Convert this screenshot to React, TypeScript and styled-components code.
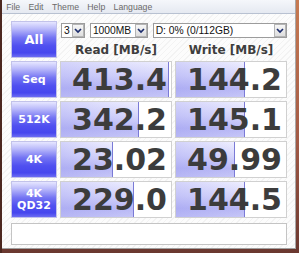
import React from 'react';
import styled, { createGlobalStyle } from 'styled-components';

const Global = createGlobalStyle`
  html, body { margin: 0; padding: 0; background: #fff; }
  body { width: 299px; height: 253px; overflow: hidden; }
`;

const Frame = styled.div`
  width: 299px;
  height: 253px;
  box-sizing: border-box;
  display: flex;
  padding: 0 3px 4px 2px;
  background:
    linear-gradient(to right, #4c2820 0, #4c2820 2px, transparent 2px),
    linear-gradient(to bottom, #c77a52 0%, #a25a46 55%, #6a3830 100%);
`;

const Client = styled.div`
  flex: 1;
  display: flex;
  flex-direction: column;
  border-right: 1px solid #a9a9a9;
  border-bottom: 1px solid #a0a0a0;
  background: repeating-linear-gradient(135deg, #fcfcfc 0px, #fcfcfc 3px, #f3f3f3 3px, #f3f3f3 4px);
`;

const MenuBar = styled.div`
  height: 12px;
  padding-top: 1px;
  display: flex;
  align-items: flex-start;
  background: linear-gradient(to bottom, #f5f7fb, #e5e9f1);
  border-bottom: 1px solid #b8c1d1;
  font-family: 'Liberation Sans', Arial, sans-serif;
  font-size: 8.7px;
  line-height: 12px;
  color: #6a6a6a;
`;

const MenuItem = styled.span`
  padding: 0 4.2px;
`;

const Body = styled.div`
  display: flex;
  flex-direction: column;
  padding: 7px 0 0 9px;
`;

const Grid = styled.div`
  display: grid;
  grid-template-columns: 46px 112px 112px;
  grid-auto-rows: 37px;
  column-gap: 3px;
  row-gap: 3px;
`;

const LabelButton = styled.div<{ $big?: boolean }>`
  box-sizing: border-box;
  border: 1px solid #c2c2ea;
  background: linear-gradient(to bottom, #e6e6ff 0%, #b8b8fa 20%, #7474f3 45%, #5050f0 68%, #4646ee 88%, #6c6cf3 100%);
  color: #fff;
  font-family: 'DejaVu Sans', Verdana, sans-serif;
  font-weight: bold;
  font-size: ${(p) => (p.$big ? '13px' : '11px')};
  line-height: 12px;
  display: flex;
  align-items: center;
  justify-content: center;
  text-align: center;
`;

const TopArea = styled.div`
  grid-column: 2 / span 2;
  display: flex;
  flex-direction: column;
`;

const SelectRow = styled.div`
  display: flex;
  gap: 5px;
  margin: 2px 0 0 1px;
`;

const SelectBox = styled.div<{ $w: number }>`
  box-sizing: border-box;
  width: ${(p) => p.$w}px;
  height: 15px;
  display: flex;
  border: 1px solid #9c9c9c;
  background: #fff;
`;

const SelectText = styled.span`
  flex: 1;
  padding-left: 2px;
  font-family: 'Liberation Sans', Arial, sans-serif;
  font-size: 10.3px;
  line-height: 13px;
  color: #111;
  white-space: nowrap;
  overflow: hidden;
`;

const ArrowBox = styled.span`
  box-sizing: border-box;
  width: 12px;
  height: 13px;
  border: 1px solid #b4b4b4;
  background: linear-gradient(to bottom, #f6f6f6, #dedede);
  display: flex;
  align-items: center;
  justify-content: center;
`;

const Headers = styled.div`
  display: grid;
  grid-template-columns: 112px 112px;
  column-gap: 3px;
  margin-top: 5px;
  font-family: 'DejaVu Sans', Verdana, sans-serif;
  font-weight: bold;
  font-size: 12px;
  line-height: 14px;
  color: #3e3e3e;
  text-align: center;
`;

const Cell = styled.div`
  position: relative;
  box-sizing: border-box;
  border: 1px solid #d0d0d0;
  background: #fff;
  overflow: hidden;
  display: flex;
  align-items: center;
  justify-content: flex-end;
  padding-right: 4px;
`;

const Bar = styled.div`
  position: absolute;
  left: 0;
  top: 0;
  bottom: 0;
  box-sizing: border-box;
  border-right: 1px solid #7a7ad6;
  background:
    linear-gradient(to right, rgba(150, 150, 240, 0.3), rgba(150, 150, 240, 0)),
    linear-gradient(to bottom, #eeeeff 0%, #d6d6fb 40%, #b8b8f5 75%, #c6c6f7 100%);
`;

const Value = styled.span`
  position: relative;
  font-family: 'DejaVu Sans', Verdana, sans-serif;
  font-weight: bold;
  font-size: 30px;
  line-height: 30px;
  color: #3c3c3c;
`;

const InfoBox = styled.div`
  box-sizing: border-box;
  width: 276px;
  height: 22px;
  margin-top: 5px;
  border: 1px solid #c4c4c4;
  background: #fff;
`;

const Chevron = () => (
  <svg width="8" height="6" viewBox="0 0 8 6">
    <polyline points="1,1 4,4 7,1" fill="none" stroke="#1c2c6c" strokeWidth="1.7" />
  </svg>
);

const Select = ({ w, text }: { w: number; text: string }) => (
  <SelectBox $w={w}>
    <SelectText>{text}</SelectText>
    <ArrowBox>
      <Chevron />
    </ArrowBox>
  </SelectBox>
);

type Row = { label: React.ReactNode; read: string; rw: number; write: string; ww: number };

const rows: Row[] = [
  { label: 'Seq', read: '413.4', rw: 108, write: '144.2', ww: 69 },
  { label: '512K', read: '342.2', rw: 78, write: '145.1', ww: 69 },
  { label: '4K', read: '23.02', rw: 52, write: '49.99', ww: 59 },
  { label: <>4K<br />QD32</>, read: '229.0', rw: 73, write: '144.5', ww: 69 },
];

export default function App() {
  return (
    <>
      <Global />
      <Frame>
        <Client>
          <MenuBar>
            <MenuItem>File</MenuItem>
            <MenuItem>Edit</MenuItem>
            <MenuItem>Theme</MenuItem>
            <MenuItem>Help</MenuItem>
            <MenuItem>Language</MenuItem>
          </MenuBar>
          <Body>
            <Grid>
              <LabelButton $big>All</LabelButton>
              <TopArea>
                <SelectRow>
                  <Select w={24} text="3" />
                  <Select w={58} text="1000MB" />
                  <Select w={135} text="D: 0% (0/112GB)" />
                </SelectRow>
                <Headers>
                  <span>Read [MB/s]</span>
                  <span>Write [MB/s]</span>
                </Headers>
              </TopArea>
              {rows.map((r, i) => (
                <React.Fragment key={i}>
                  <LabelButton>{r.label}</LabelButton>
                  <Cell>
                    <Bar style={{ width: r.rw }} />
                    <Value>{r.read}</Value>
                  </Cell>
                  <Cell>
                    <Bar style={{ width: r.ww }} />
                    <Value>{r.write}</Value>
                  </Cell>
                </React.Fragment>
              ))}
            </Grid>
            <InfoBox />
          </Body>
        </Client>
      </Frame>
    </>
  );
}
